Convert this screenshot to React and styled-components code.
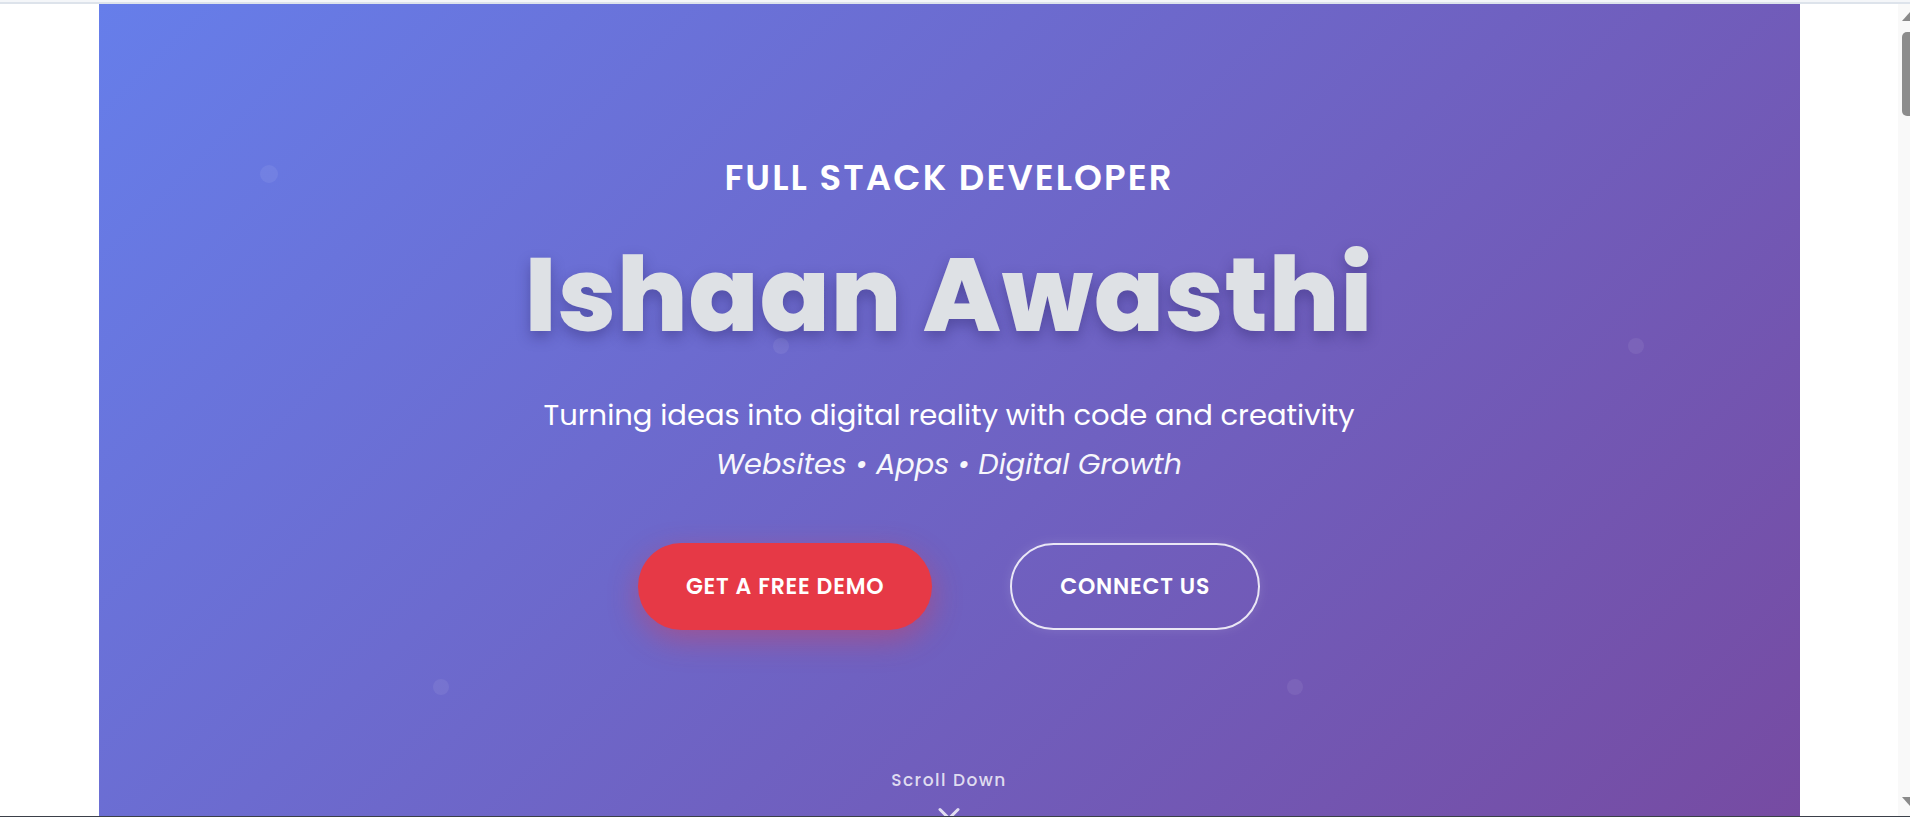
import styled, { createGlobalStyle } from 'styled-components';
import { ChevronDown } from 'lucide-react';

const GlobalStyle = createGlobalStyle`
    html, body {
        margin: 0;
        padding: 0;
        background: #ffffff;
        overflow: hidden;
    }
    * {
        box-sizing: border-box;
    }
`;

const particles = [
    { x: 161, y: 161, size: 18 },
    { x: 674, y: 334, size: 16 },
    { x: 1529, y: 334, size: 16 },
    { x: 334, y: 675, size: 16 },
    { x: 1188, y: 675, size: 16 },
];

export default function App() {
    return (
        <Page>
            <GlobalStyle />
            <TopBar />
            <Body>
                <Main>
                    <Hero>
                        {particles.map((p, i) => (
                            <Particle key={i} x={p.x} y={p.y} size={p.size} />
                        ))}
                        <Tagline>FULL STACK DEVELOPER</Tagline>
                        <Name>Ishaan Awasthi</Name>
                        <Lead>Turning ideas into digital reality with code and creativity</Lead>
                        <Services>Websites • Apps • Digital Growth</Services>
                        <Actions>
                            <Button primary>GET A FREE DEMO</Button>
                            <Button>CONNECT US</Button>
                        </Actions>
                        <ScrollHint>
                            <span>Scroll Down</span>
                            <ChevronDown size={36} strokeWidth={2} />
                        </ScrollHint>
                    </Hero>
                </Main>
                <Scrollbar>
                    <Arrow />
                    <Thumb />
                    <Arrow down />
                </Scrollbar>
            </Body>
            <BottomLine />
        </Page>
    );
}

const Page = styled.div`
    height: 817px;
    display: flex;
    flex-direction: column;
    overflow: hidden;
    font-family: 'Poppins', 'Inter', 'Noto Sans', sans-serif;
`;

const TopBar = styled.div`
    height: 4px;
    flex-shrink: 0;
    border-top: 2px solid #f4f6f9;
    background: #dde3eb;
`;

const Body = styled.div`
    flex: 1;
    display: flex;
    min-height: 0;
`;

const Main = styled.main`
    flex: 1;
    display: flex;
    justify-content: center;
`;

const Hero = styled.section`
    position: relative;
    width: 1701px;
    height: 100%;
    overflow: hidden;
    background: linear-gradient(135deg, #667eea 0%, #764ba2 100%);
    display: flex;
    flex-direction: column;
    align-items: center;
    padding-top: 156px;
    color: #ffffff;
    text-align: center;
`;

const Particle = styled.span`
    position: absolute;
    left: ${({ x }) => x}px;
    top: ${({ y }) => y}px;
    width: ${({ size }) => size}px;
    height: ${({ size }) => size}px;
    border-radius: 50%;
    background: rgba(255, 255, 255, 0.07);
`;

const Tagline = styled.h2`
    margin: 0;
    font-size: 35.5px;
    line-height: 1;
    font-weight: 600;
    letter-spacing: 2.1px;
`;

const Name = styled.h1`
    margin: 48px 0 0;
    font-size: 103px;
    line-height: 1;
    font-weight: 800;
    letter-spacing: 1px;
    color: #dee1e5;
    text-shadow: 0 6px 14px rgba(35, 25, 90, 0.35);
`;

const Lead = styled.p`
    margin: 54px 0 0;
    font-size: 29px;
    line-height: 1;
    font-weight: 400;
`;

const Services = styled.p`
    margin: 20px 0 0;
    font-size: 28.8px;
    line-height: 1;
    font-style: italic;
    font-weight: 400;
    opacity: 0.95;
`;

const Actions = styled.div`
    margin-top: 65px;
    display: flex;
    gap: 78px;
`;

const Button = styled.button`
    height: 87px;
    padding: 0 48px;
    border-radius: 50px;
    font-family: inherit;
    font-size: 22px;
    font-weight: 600;
    letter-spacing: 0.8px;
    color: #ffffff;
    cursor: pointer;
    background: ${({ primary }) => (primary ? '#e63946' : 'transparent')};
    border: ${({ primary }) => (primary ? 'none' : '2px solid rgba(255, 255, 255, 0.85)')};
    box-shadow: ${({ primary }) =>
        primary ? '0 10px 30px rgba(230, 57, 70, 0.4)' : '0 0 12px rgba(255, 255, 255, 0.12)'};
`;

const ScrollHint = styled.div`
    margin-top: 142px;
    display: flex;
    flex-direction: column;
    align-items: center;
    color: rgba(255, 255, 255, 0.8);

    span {
        font-size: 17px;
        line-height: 1;
        font-weight: 500;
        letter-spacing: 1.5px;
    }

    svg {
        margin-top: 7px;
    }
`;

const Scrollbar = styled.div`
    width: 12px;
    flex-shrink: 0;
    background: #f9f9f9;
    overflow: hidden;
    display: flex;
    flex-direction: column;
    padding: 8px 0 10px 4px;
`;

const Arrow = styled.div`
    width: 0;
    height: 0;
    border-left: 8px solid transparent;
    border-right: 8px solid transparent;
    ${({ down }) =>
        down
            ? 'border-top: 9px solid #8a8a8a; margin-top: auto;'
            : 'border-bottom: 9px solid #8a8a8a;'}
`;

const Thumb = styled.div`
    margin-top: 11px;
    width: 16px;
    height: 84px;
    border-radius: 5px;
    background: #8c8c8c;
`;

const BottomLine = styled.div`
    height: 1px;
    flex-shrink: 0;
    background: #3b4049;
`;
